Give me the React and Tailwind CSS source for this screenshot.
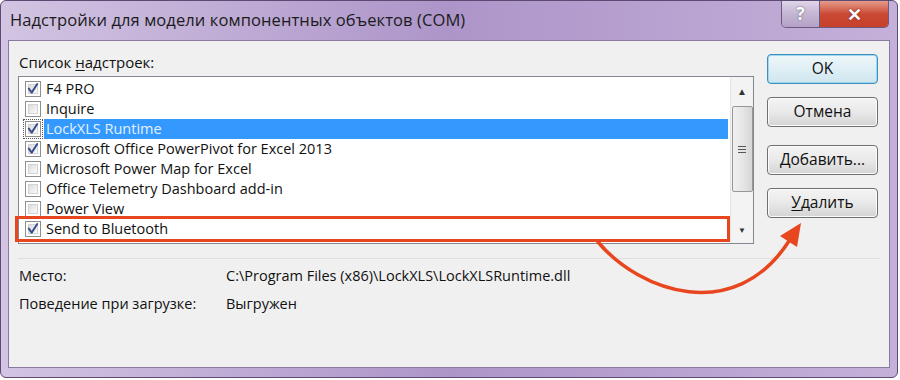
import React from "react";

const items = [
  { name: "F4 PRO", checked: true },
  { name: "Inquire", checked: false },
  { name: "LockXLS Runtime", checked: true, selected: true },
  { name: "Microsoft Office PowerPivot for Excel 2013", checked: true },
  { name: "Microsoft Power Map for Excel", checked: false },
  { name: "Office Telemetry Dashboard add-in", checked: false },
  { name: "Power View", checked: false },
  { name: "Send to Bluetooth", checked: true },
];

function CheckBox({ checked, focused }) {
  return (
    <div className={`relative h-[16px] w-[16px] shrink-0 ${focused ? "outline outline-1 outline-dotted outline-[#555] outline-offset-[1px]" : ""}`}>
      <div className="absolute inset-0 border border-[#8e8f8f] bg-white">
        <div className="absolute inset-[2px] border border-[#d3d3d3] bg-gradient-to-br from-[#dcdcdc] to-[#fbfbfb]" />
      </div>
      {checked && (
        <svg className="absolute inset-0" width="16" height="16" viewBox="0 0 16 16">
          <path d="M3.8 7.6 L6.7 11.6 L12.2 3" fill="none" stroke="#3b4f8c" strokeWidth="2" strokeLinecap="round" strokeLinejoin="round" />
        </svg>
      )}
    </div>
  );
}

function Btn({ children, primary }) {
  return (
    <button
      className={`flex h-[30px] w-[111px] items-center justify-center rounded-[4px] border text-[15.5px] text-[#111] ${
        primary
          ? "border-[#3c8fbf] bg-gradient-to-b from-[#eef6f9] via-[#dfeff5] to-[#cfe6ee] shadow-[inset_0_0_0_1px_#9fd8ee]"
          : "border-[#707070] bg-gradient-to-b from-[#f4f4f4] via-[#e9e9e9] to-[#d4d4d4] shadow-[inset_0_0_0_1px_#fbfbfb]"
      }`}
    >
      {children}
    </button>
  );
}

export default function App() {
  return (
    <div
      className="relative h-[380px] w-[900px] overflow-hidden bg-white"
      style={{ fontFamily: '"Open Sans", "Noto Sans", sans-serif' }}
    >
      <div className="h-[378px] w-[898px] rounded-[6px] border border-[#5c4a72] bg-gradient-to-r from-[#d2c4e2] via-[#ad95c9] to-[#c4b0d9]">
        {/* title bar */}
        <div className="flex h-[39px] items-start">
          <div className="pl-[9px] pt-[7px] text-[16.5px] tracking-[0.1px] text-[#1b1b1b]">
            Надстройки для модели компонентных объектов (COM)
          </div>
          <div className="ml-auto mr-[8px] flex h-[27px] overflow-hidden rounded-b-[5px] border border-t-0 border-[#6b5a80]">
            <div className="flex w-[38px] items-center justify-center border-r border-[#6b5a80] bg-gradient-to-b from-[#e0d6ea] via-[#c4b5d4] to-[#b3a2c6] text-[17px] font-bold text-white [text-shadow:0_0_2px_#555]">
              ?
            </div>
            <div className="flex w-[68px] items-center justify-center bg-gradient-to-b from-[#e59a8a] via-[#c94a35] to-[#c7402a] text-[18px] font-bold text-white [text-shadow:0_0_2px_#611]">
              ✕
            </div>
          </div>
        </div>

        {/* client area */}
        <div className="ml-[7px] h-[328px] w-[882px] border border-[#8a7aa0] bg-[#f0f0f0]">
          <div className="flex px-[9px] pt-[12px]">
            <div className="w-[736px]">
              <div className="flex h-[23px] items-start pl-[1px] text-[15px] leading-[18px] text-[#111]">
                Список <span className="ml-[4px] underline underline-offset-2">н</span>адстроек:
              </div>
              <div className="flex h-[168px] border border-[#828790] bg-white">
                <div className="flex-1 pt-[2px]">
                  {items.map((it) => (
                    <div key={it.name} className="flex h-[20px] items-center pl-[6px]">
                      <CheckBox checked={it.checked} focused={it.selected} />
                      <div
                        className={`ml-[3px] flex h-[20px] flex-1 items-center pl-[2px] text-[14.5px] ${
                          it.selected ? "bg-[#3399ff] text-[#e3f1ff]" : "text-[#111]"
                        }`}
                      >
                        {it.name}
                      </div>
                    </div>
                  ))}
                </div>
                <div className="ml-[2px] flex w-[23px] flex-col items-center border-l border-[#e6e6e6] bg-[#f3f3f3]">
                  <div className="flex h-[29px] items-center justify-center text-[10px] text-[#333]">▲</div>
                  <div className="flex h-[86px] w-[21px] flex-col items-center justify-center gap-[2px] rounded-[2px] border border-[#979797] bg-gradient-to-r from-[#f0f0f0] via-[#e6e6e6] to-[#d6d6d6]">
                    <div className="h-px w-[8px] bg-[#555]" />
                    <div className="h-px w-[8px] bg-[#555]" />
                    <div className="h-px w-[8px] bg-[#555]" />
                  </div>
                  <div className="flex flex-1 items-end justify-center pb-[7px] text-[8px] text-[#333]">▼</div>
                </div>
              </div>
            </div>
            <div className="ml-auto mr-[2px] flex flex-col pt-[1px]">
              <Btn primary>OK</Btn>
              <div className="mt-[13px]">
                <Btn>Отмена</Btn>
              </div>
              <div className="mt-[18px]">
                <Btn>
                  <span className="underline underline-offset-2">Д</span>обавить...
                </Btn>
              </div>
              <div className="mt-[13px]">
                <Btn>
                  <span className="underline underline-offset-2">У</span>далить
                </Btn>
              </div>
            </div>
          </div>

          <div className="mx-[9px] mt-[14px] h-px bg-[#dfdfdf]" />

          <div className="pl-[10px] pt-[3px] text-[14.5px] text-[#111]">
            <div className="flex h-[28px] items-center">
              <div className="w-[207px]">Место:</div>
              <div>C:\Program Files (x86)\LockXLS\LockXLSRuntime.dll</div>
            </div>
            <div className="flex h-[28px] items-center">
              <div className="w-[207px]">Поведение при загрузке:</div>
              <div>Выгружен</div>
            </div>
          </div>
        </div>
      </div>

      {/* annotation */}
      <div className="absolute left-[15px] top-[216px] h-[26px] w-[715px] border-[3px] border-[#e8461e]" />
      <svg className="absolute left-0 top-0" width="900" height="380" viewBox="0 0 900 380">
        <path d="M598 242 C640 292, 735 325, 789 241" fill="none" stroke="#e8461e" strokeWidth="3.5" strokeLinecap="round" />
        <polygon points="801,223 780,236 797,247" fill="#e8461e" />
      </svg>
    </div>
  );
}
